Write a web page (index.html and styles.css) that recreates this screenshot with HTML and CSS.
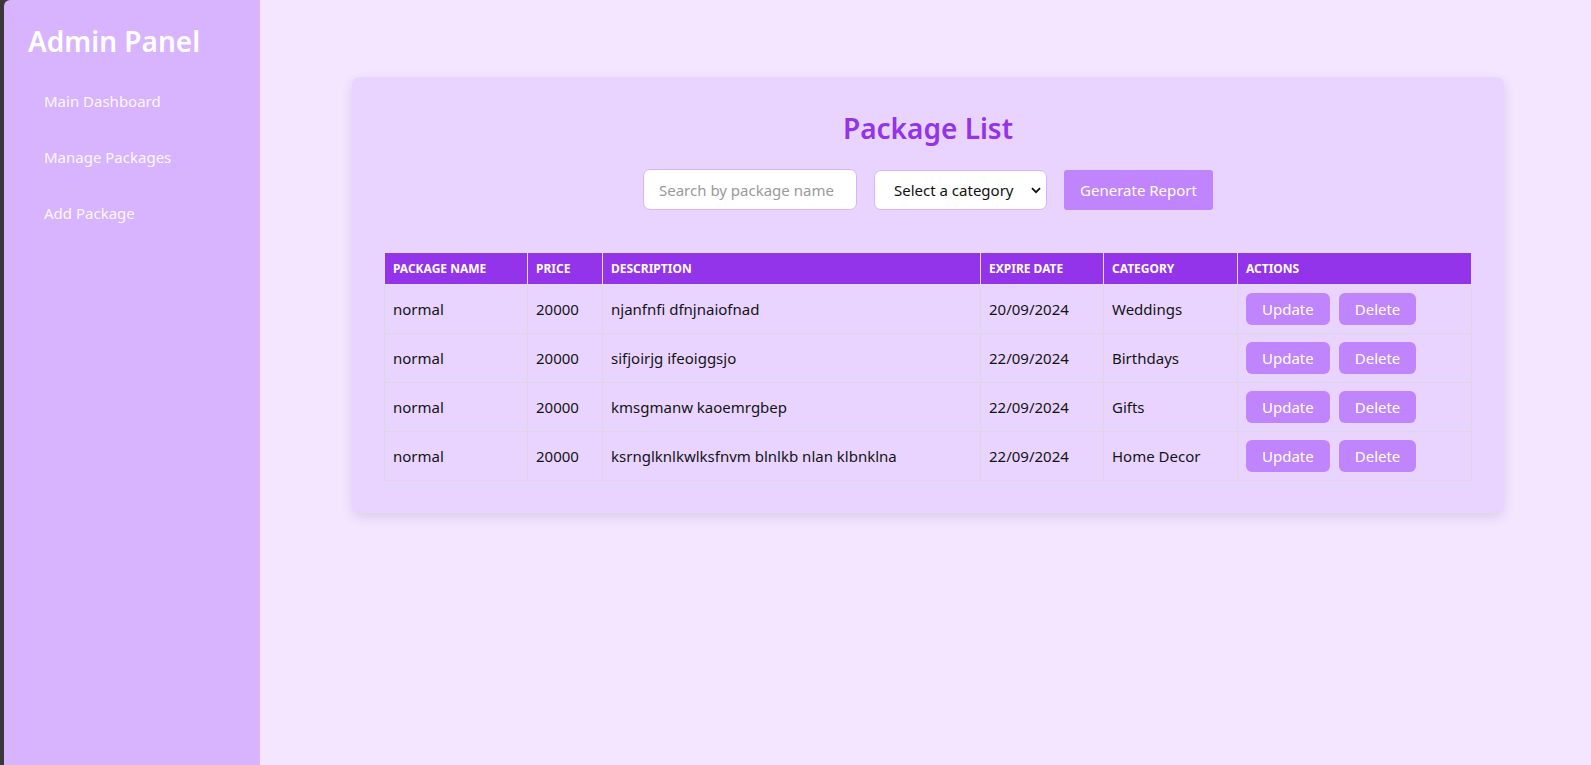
FILE: index.html
```html
<!DOCTYPE html>
<html lang="en">
<head>
<meta charset="utf-8">
<title>Admin Panel - Package List</title>
<link rel="stylesheet" href="styles.css">
</head>
<body>
<div class="app">
  <aside class="sidebar">
    <h1 class="brand">Admin Panel</h1>
    <nav class="nav">
      <a class="nav-item" href="#">Main Dashboard</a>
      <a class="nav-item" href="#">Manage Packages</a>
      <a class="nav-item" href="#">Add Package</a>
    </nav>
  </aside>
  <main class="main">
    <section class="card">
      <h2 class="title">Package List</h2>
      <div class="controls">
        <input class="search" type="text" placeholder="Search by package name">
        <div class="select-wrap">
          <select class="select">
            <option>Select a category</option>
          </select>
          <svg class="chev" width="10" height="7" viewBox="0 0 10 7"><path d="M1 1.2 L5 5.2 L9 1.2" fill="none" stroke="#111" stroke-width="1.8"/></svg>
        </div>
        <button class="btn report">Generate Report</button>
      </div>
      <table class="table">
        <colgroup>
          <col class="c1"><col class="c2"><col class="c3"><col class="c4"><col class="c5"><col class="c6">
        </colgroup>
        <thead>
          <tr>
            <th>Package Name</th>
            <th>Price</th>
            <th>Description</th>
            <th>Expire Date</th>
            <th>Category</th>
            <th>Actions</th>
          </tr>
        </thead>
        <tbody>
          <tr>
            <td>normal</td><td>20000</td><td>njanfnfi dfnjnaiofnad</td><td>20/09/2024</td><td>Weddings</td>
            <td><div class="actions"><button class="btn small">Update</button><button class="btn small">Delete</button></div></td>
          </tr>
          <tr>
            <td>normal</td><td>20000</td><td>sifjoirjg ifeoiggsjo</td><td>22/09/2024</td><td>Birthdays</td>
            <td><div class="actions"><button class="btn small">Update</button><button class="btn small">Delete</button></div></td>
          </tr>
          <tr>
            <td>normal</td><td>20000</td><td>kmsgmanw kaoemrgbep</td><td>22/09/2024</td><td>Gifts</td>
            <td><div class="actions"><button class="btn small">Update</button><button class="btn small">Delete</button></div></td>
          </tr>
          <tr>
            <td>normal</td><td>20000</td><td>ksrnglknlkwlksfnvm blnlkb nlan klbnklna</td><td>22/09/2024</td><td>Home Decor</td>
            <td><div class="actions"><button class="btn small">Update</button><button class="btn small">Delete</button></div></td>
          </tr>
        </tbody>
      </table>
    </section>
  </main>
</div>
</body>
</html>
```
FILE: styles.css
```css
* { box-sizing: border-box; }

html, body {
  margin: 0;
  height: 100%;
}

body {
  background: #3a3838;
  font-family: "Noto Sans", "Open Sans", sans-serif;
  color: #141414;
  overflow: hidden;
}

.app {
  display: flex;
  height: 765px;
  margin-left: 4px;
  border-top-left-radius: 6px;
  overflow: hidden;
}

.sidebar {
  width: 256px;
  flex: none;
  background: #d8b4fe;
  padding: 22px 24px;
}

.brand {
  margin: 0 0 13px;
  font-size: 28px;
  line-height: 38px;
  font-weight: 600;
  color: #ffffff;
}

.nav {
  display: flex;
  flex-direction: column;
}

.nav-item {
  display: block;
  padding: 18px 16px;
  font-size: 15px;
  line-height: 20px;
  color: #fbf7ff;
  text-decoration: none;
}

.main {
  flex: 1;
  background: #f4e6ff;
  padding: 77px 87px 0 92px;
}

.card {
  background: #e9d4ff;
  border-radius: 8px;
  padding: 32px;
  box-shadow: 0 4px 12px rgba(80, 40, 120, 0.14);
}

.title {
  margin: 0 0 22px;
  text-align: center;
  font-size: 28px;
  line-height: 38px;
  font-weight: 600;
  color: #9333ea;
}

.controls {
  display: flex;
  justify-content: center;
  align-items: center;
  gap: 17px;
  margin-bottom: 42px;
}

.search {
  width: 214px;
  height: 41px;
  border: 1px solid #d8b4fe;
  border-radius: 7px;
  background: #fff;
  padding: 0 15px;
  font-family: inherit;
  font-size: 15px;
  color: #222;
  outline: none;
}

.search::placeholder {
  color: #9a9a9a;
}

.select-wrap {
  position: relative;
}

.select {
  -webkit-appearance: none;
  appearance: none;
  width: 173px;
  height: 40px;
  border: 1px solid #d8b4fe;
  border-radius: 7px;
  background: #fff;
  padding: 0 28px 0 19px;
  font-family: inherit;
  font-size: 15px;
  color: #111;
}

.chev {
  position: absolute;
  right: 6px;
  top: 17px;
  pointer-events: none;
}

.btn {
  border: none;
  background: #c084fc;
  color: #fff;
  font-family: inherit;
  cursor: pointer;
}

.report {
  height: 40px;
  width: 149px;
  border-radius: 3px;
  font-size: 15px;
}

.table {
  width: 100%;
  border-collapse: collapse;
  table-layout: fixed;
}

.c1 { width: 143px; }
.c2 { width: 75px; }
.c3 { width: 378px; }
.c4 { width: 123px; }
.c5 { width: 134px; }
.c6 { width: auto; }

.table th {
  background: #9333ea;
  color: #fff;
  text-align: left;
  text-transform: uppercase;
  font-size: 12px;
  font-weight: 700;
  line-height: 15px;
  padding: 8px 8px;
  border: 1px solid #e2dbe8;
}

.table td {
  font-size: 15px;
  line-height: 20px;
  padding: 8px 8px;
  border: 1px solid #ddd6e6;
  white-space: nowrap;
  height: 49px;
}

.actions {
  display: flex;
  gap: 9px;
}

.small {
  height: 32px;
  padding: 0 16px;
  border-radius: 6px;
  font-size: 15px;
}
```
